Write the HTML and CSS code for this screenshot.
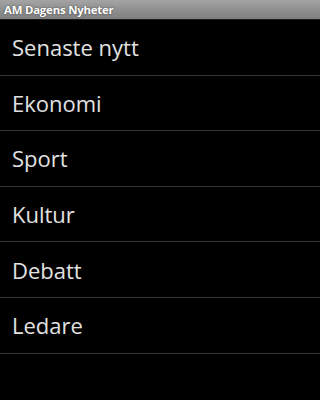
FILE: index.html
```html
<!DOCTYPE html>
<html>
<head>
<meta charset="utf-8">
<link rel="stylesheet" href="styles.css">
</head>
<body>
<div class="titlebar"><span class="title">AM Dagens Nyheter</span></div>
<ul class="list">
<li class="item">Senaste nytt</li>
<li class="item">Ekonomi</li>
<li class="item">Sport</li>
<li class="item">Kultur</li>
<li class="item">Debatt</li>
<li class="item">Ledare</li>
</ul>
</body>
</html>
```
FILE: styles.css
```css
html, body {
  margin: 0;
  padding: 0;
  background: #000;
  height: 100%;
}
body {
  font-family: "Open Sans", "DejaVu Sans", sans-serif;
  overflow: hidden;
}
.titlebar {
  height: 19px;
  background: linear-gradient(#a4a4a4, #8c8c8c 60%, #7e7e7e);
  border-bottom: 1px solid #1c1c1c;
  display: flex;
  align-items: center;
  padding-left: 4px;
}
.title {
  color: #fff;
  font-weight: bold;
  font-size: 11.4px;
  letter-spacing: -0.2px;
  text-shadow: 0 0 2px rgba(0,0,0,0.6);
  line-height: 1;
  margin-top: 1px;
}
.list {
  list-style: none;
  margin: 0;
  padding: 0;
}
.item {
  height: 54.6px;
  border-bottom: 1px solid #333;
  display: flex;
  align-items: center;
  padding-left: 12px;
  color: #e2e2e2;
  font-size: 22px;
}
```
